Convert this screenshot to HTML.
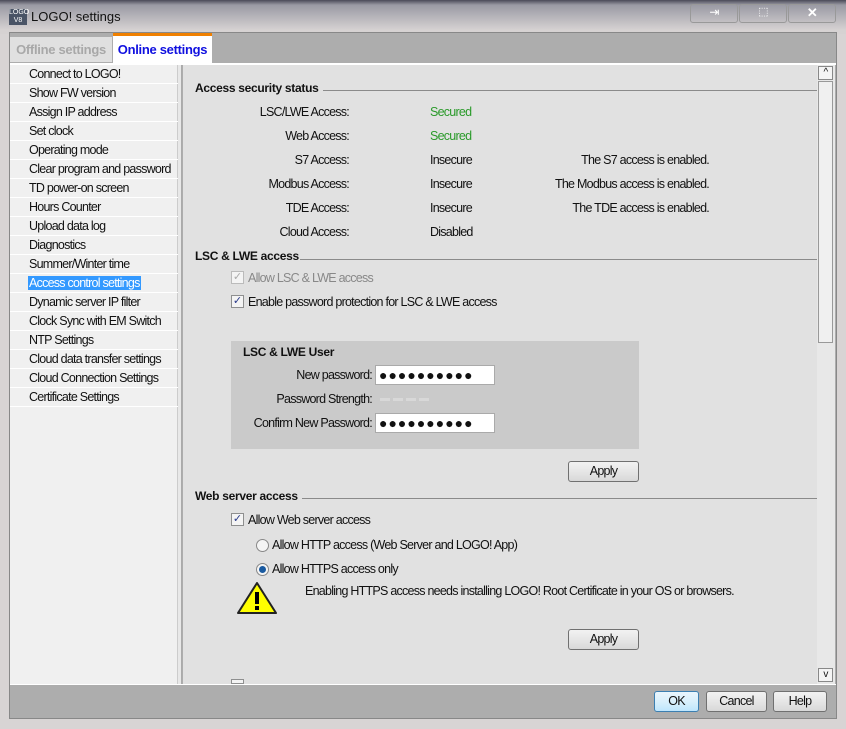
<!DOCTYPE html>
<html><head><meta charset="utf-8"><style>
*{margin:0;padding:0;box-sizing:border-box}
body{width:846px;height:729px;overflow:hidden;background:#d8d4d4;font-family:"Liberation Sans",sans-serif;font-size:12.5px;letter-spacing:-0.75px;color:#111;position:relative}
.a{position:absolute;white-space:nowrap}
.nav{position:absolute;left:10px;width:168px;height:19px;border-bottom:1px solid #fff;padding-left:19px;line-height:18px;white-space:nowrap}
.b{font-family:"Liberation Sans",sans-serif;font-weight:bold;font-size:12px;letter-spacing:-0.3px}
.hr{position:absolute;height:1px;background:#8a8a8a}
.btn{position:absolute;height:21px;border:1px solid #707070;border-radius:3px;background:linear-gradient(#f2f2f2,#e6e6e6 50%,#d8d8d8);text-align:center;line-height:19px}
.cb{position:absolute;width:13px;height:13px;border:1px solid #8e8f8f;background:#f4f4f4;font-size:11px;line-height:11px;text-align:center;color:#2a3a8a;letter-spacing:0}
.rd{position:absolute;width:13px;height:13px;border:1px solid #888;border-radius:50%;background:#f4f4f4}
.pw{position:absolute;width:120px;height:20px;background:#fff;border:1px solid #aaa;font-size:14px;letter-spacing:1px;line-height:18px;padding-left:3px}
.r{text-align:right}
</style></head><body>
<div class="a" style="left:0;top:0;width:846px;height:34px;background:linear-gradient(#4a4a58 0,#9a9aa4 5px,#d6d2d2 30px)"></div>
<div class="a" style="left:9px;top:9px;width:18px;height:16px;background:#4a5466;color:#fff;font-size:7px;line-height:8px;text-align:center;letter-spacing:0">LOGO<br>V8</div>
<div class="a" style="left:31px;top:9px;font-size:13px;letter-spacing:0">LOGO! settings</div>
<div class="a" style="left:690px;top:4px;width:48px;height:19px;border:1px solid #999;border-radius:3px;color:#fff;text-align:center;font-size:12px">⇥</div>
<div class="a" style="left:739px;top:4px;width:48px;height:19px;border:1px solid #999;border-radius:3px;color:#fff;text-align:center;font-size:11px">⬚</div>
<div class="a" style="left:788px;top:4px;width:48px;height:19px;border:1px solid #999;border-radius:3px;color:#fff;text-align:center;font-weight:bold;font-size:13px">✕</div>
<div class="a" style="left:9px;top:32px;width:828px;height:687px;background:#adadad;border:1px solid #888"></div>
<div class="a b" style="left:10px;top:37px;width:102px;height:25px;background:#e0e0e0;color:#a8a8a8;font-size:13px;line-height:25px;text-align:center">Offline settings</div>
<div class="a" style="left:113px;top:33px;width:99px;height:30px;background:#fff;border-top:3px solid #f08000"></div>
<div class="a b" style="left:113px;top:37px;width:99px;height:25px;color:#1010e0;font-size:13px;line-height:25px;text-align:center">Online settings</div>
<div class="a" style="left:10px;top:63px;width:826px;height:2px;background:#fff"></div>
<div class="a" style="left:10px;top:65px;width:168px;height:619px;background:#f0f0f0;border-right:1px solid #ccc"></div>
<div class="a" style="left:178px;top:65px;width:4px;height:619px;background:#e8e8e8;border-right:1px solid #aaa"></div>
<div class="nav" style="top:65px">Connect to LOGO!</div>
<div class="nav" style="top:84px">Show FW version</div>
<div class="nav" style="top:103px">Assign IP address</div>
<div class="nav" style="top:122px">Set clock</div>
<div class="nav" style="top:141px">Operating mode</div>
<div class="nav" style="top:160px">Clear program and password</div>
<div class="nav" style="top:179px">TD power-on screen</div>
<div class="nav" style="top:198px">Hours Counter</div>
<div class="nav" style="top:217px">Upload data log</div>
<div class="nav" style="top:236px">Diagnostics</div>
<div class="nav" style="top:255px">Summer/Winter time</div>
<div class="nav" style="top:274px"><span style="background:#3399ff;color:#fff;padding:0 1px;margin-left:-1px">Access control settings</span></div>
<div class="nav" style="top:293px">Dynamic server IP filter</div>
<div class="nav" style="top:312px">Clock Sync with EM Switch</div>
<div class="nav" style="top:331px">NTP Settings</div>
<div class="nav" style="top:350px">Cloud data transfer settings</div>
<div class="nav" style="top:369px">Cloud Connection Settings</div>
<div class="nav" style="top:388px">Certificate Settings</div>
<div class="a" style="left:183px;top:65px;width:634px;height:619px;background:#e1e1e1"></div>
<div class="a" style="left:817px;top:65px;width:18px;height:619px;background:#e8e8e8"></div>
<div class="a" style="left:818px;top:66px;width:15px;height:14px;border:1px solid #888;background:#f4f4f4;font-size:10px;text-align:center;line-height:12px">^</div>
<div class="a" style="left:818px;top:81px;width:15px;height:262px;border:1px solid #999;background:#f0f0f0"></div>
<div class="a" style="left:818px;top:668px;width:15px;height:14px;border:1px solid #888;background:#f4f4f4;font-size:10px;text-align:center;line-height:12px">v</div>

<div class="a b" style="left:195px;top:81px">Access security status</div>
<div class="hr" style="left:323px;top:90px;width:494px"></div>
<div class="a r" style="left:200px;top:105px;width:149px">LSC/LWE Access:</div>
<div class="a r" style="left:200px;top:129px;width:149px">Web Access:</div>
<div class="a r" style="left:200px;top:153px;width:149px">S7 Access:</div>
<div class="a r" style="left:200px;top:177px;width:149px">Modbus Access:</div>
<div class="a r" style="left:200px;top:201px;width:149px">TDE Access:</div>
<div class="a r" style="left:200px;top:225px;width:149px">Cloud Access:</div>
<div class="a" style="left:430px;top:105px;color:#2a9a2a">Secured</div>
<div class="a" style="left:430px;top:129px;color:#2a9a2a">Secured</div>
<div class="a" style="left:430px;top:153px">Insecure</div>
<div class="a" style="left:430px;top:177px">Insecure</div>
<div class="a" style="left:430px;top:201px">Insecure</div>
<div class="a" style="left:430px;top:225px">Disabled</div>
<div class="a r" style="left:500px;top:153px;width:209px">The S7 access is enabled.</div>
<div class="a r" style="left:500px;top:177px;width:209px">The Modbus access is enabled.</div>
<div class="a r" style="left:500px;top:201px;width:209px">The TDE access is enabled.</div>

<div class="a b" style="left:195px;top:249px">LSC &amp; LWE access</div>
<div class="hr" style="left:300px;top:259px;width:517px"></div>
<div class="cb" style="left:231px;top:271px;color:#aaa;border-color:#bbb">✓</div>
<div class="a" style="left:248px;top:271px;color:#888">Allow LSC &amp; LWE access</div>
<div class="cb" style="left:231px;top:295px">✓</div>
<div class="a" style="left:248px;top:295px">Enable password protection for LSC &amp; LWE access</div>

<div class="a" style="left:231px;top:341px;width:408px;height:108px;background:#cacaca"></div>
<div class="a b" style="left:243px;top:345px">LSC &amp; LWE User</div>
<div class="a r" style="left:240px;top:368px;width:132px">New password:</div>
<div class="a r" style="left:240px;top:392px;width:132px">Password Strength:</div>
<div class="a r" style="left:240px;top:416px;width:132px">Confirm New Password:</div>
<div class="pw" style="left:375px;top:365px">●●●●●●●●●●</div>
<div class="pw" style="left:375px;top:413px">●●●●●●●●●●</div>
<div class="a" style="left:380px;top:398px;width:49px;height:3px;background:repeating-linear-gradient(90deg,#d8d8d8 0 10px,transparent 10px 13px)"></div>
<div class="btn" style="left:568px;top:461px;width:71px">Apply</div>

<div class="a b" style="left:195px;top:489px">Web server access</div>
<div class="hr" style="left:302px;top:498px;width:515px"></div>
<div class="cb" style="left:231px;top:513px">✓</div>
<div class="a" style="left:248px;top:513px">Allow Web server access</div>
<div class="rd" style="left:256px;top:539px"></div>
<div class="a" style="left:272px;top:538px">Allow HTTP access (Web Server and LOGO! App)</div>
<div class="rd" style="left:256px;top:563px"><div style="width:7px;height:7px;border-radius:50%;background:#1a5aa0;margin:2px"></div></div>
<div class="a" style="left:272px;top:562px">Allow HTTPS access only</div>
<svg class="a" style="left:236px;top:580px" width="50" height="38"><polygon points="21,3 40,33 2,33" fill="#ffff00" stroke="#222" stroke-width="2" stroke-linejoin="round"/><rect x="19" y="12" width="4" height="12" fill="#000"/><rect x="19" y="26" width="4" height="4" fill="#000"/></svg>
<div class="a" style="left:305px;top:584px">Enabling HTTPS access needs installing LOGO! Root Certificate in your OS or browsers.</div>
<div class="btn" style="left:568px;top:629px;width:71px">Apply</div>
<div class="cb" style="left:231px;top:679px;height:5px"></div>

<div class="a" style="left:10px;top:684px;width:826px;height:1px;background:#fff"></div>
<div class="btn" style="left:654px;top:691px;width:45px;border-color:#3c7fb1;background:linear-gradient(#eaf6fd,#d9f0fc 50%,#bee6fd)">OK</div>
<div class="btn" style="left:706px;top:691px;width:61px">Cancel</div>
<div class="btn" style="left:773px;top:691px;width:54px">Help</div>
</body></html>
